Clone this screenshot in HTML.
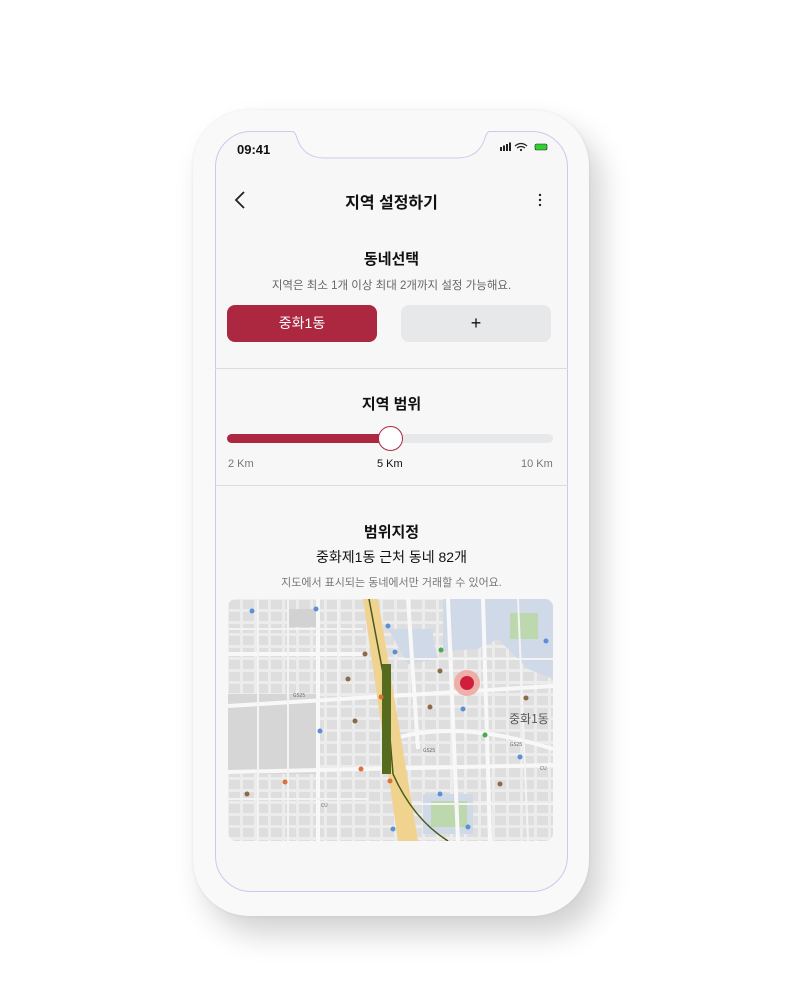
<!DOCTYPE html>
<html><head><meta charset="utf-8"><style>
*{margin:0;padding:0;box-sizing:border-box}
body{width:800px;height:1000px;background:#fff;position:relative;font-family:"Liberation Sans","Noto Sans CJK KR",sans-serif;overflow:hidden}
.phone{position:absolute;left:193px;top:110px;width:396px;height:806px;border-radius:56px;background:#f9f9f9;box-shadow:12px 18px 30px rgba(0,0,0,.18),0 0 3px rgba(0,0,0,.08)}
.screen{position:absolute;left:215px;top:131px;width:353px;height:761px;border:1px solid #cfc8ec;border-radius:36px;background:#f7f7f7;overflow:hidden}
.t{position:absolute;white-space:nowrap}
.c{left:215px;width:353px;text-align:center}
.hr{position:absolute;left:215px;width:353px;height:1px;background:#dcdcdc}
</style></head><body>
<div class="phone"></div>
<div class="screen"></div>
<svg style="position:absolute;left:285px;top:130px" width="212" height="32"><path d="M0 1 H6 Q10 1 12 8 Q18 28 40 28 H172 Q194 28 200 8 Q202 1 206 1 H212" fill="#f9f9f9" stroke="#cfc8ec" stroke-width="1"/><rect x="0" y="0" width="212" height="1" fill="#f9f9f9"/></svg>
<div class="t" style="left:237px;top:142px;font-size:13px;font-weight:bold;color:#111">09:41</div>
<svg style="position:absolute;left:500px;top:142px" width="50" height="10">
<rect x="0" y="5" width="2" height="4" fill="#222"/><rect x="3" y="3.5" width="2" height="5.5" fill="#222"/><rect x="6" y="2" width="2" height="7" fill="#222"/><rect x="9" y="0.5" width="2" height="8.5" fill="#222"/>
<path d="M15 4 Q21 -1 27 4 M17 6 Q21 3 25 6" stroke="#222" stroke-width="1.3" fill="none"/><circle cx="21" cy="8" r="1.1" fill="#222"/>
<rect x="35" y="2" width="12" height="6" rx="1.5" fill="#2ed12e" stroke="#222" stroke-width=".6"/></svg>
<svg style="position:absolute;left:233px;top:191px" width="14" height="18"><path d="M11 1 L3 9 L11 17" stroke="#222" stroke-width="1.8" fill="none"/></svg>
<div class="t c" style="top:189px;font-size:16px;font-weight:bold;color:#111">지역 설정하기</div>
<svg style="position:absolute;left:537px;top:192px" width="6" height="16"><circle cx="3" cy="3" r="1.2" fill="#222"/><circle cx="3" cy="8" r="1.2" fill="#222"/><circle cx="3" cy="13" r="1.2" fill="#222"/></svg>
<div class="t c" style="top:248px;font-size:15px;font-weight:bold;color:#111">동네선택</div>
<div class="t c" style="top:277px;font-size:11.5px;color:#666">지역은 최소 1개 이상 최대 2개까지 설정 가능해요.</div>
<div class="t" style="left:227px;top:305px;width:150px;height:37px;border-radius:8px;background:#ab2840;color:#fff;font-size:14px;text-align:center;line-height:37px">중화1동</div>
<div class="t" style="left:401px;top:305px;width:150px;height:37px;border-radius:8px;background:#e6e8e9;color:#111;font-size:18px;text-align:center;line-height:36px">+</div>
<div class="hr" style="top:368px"></div>
<div class="t c" style="top:393px;font-size:15px;font-weight:bold;color:#111">지역 범위</div>
<div class="t" style="left:227px;top:434px;width:326px;height:9px;border-radius:5px;background:#e6e8e9"></div>
<div class="t" style="left:227px;top:434px;width:165px;height:9px;border-radius:5px;background:#ab2840"></div>
<div class="t" style="left:378px;top:426px;width:25px;height:25px;border-radius:50%;background:#fff;border:1.5px solid #ab2840"></div>
<div class="t" style="left:228px;top:458px;font-size:11px;color:#777">2 Km</div>
<div class="t" style="left:377px;top:458px;font-size:11px;color:#111">5 Km</div>
<div class="t" style="left:521px;top:458px;font-size:11px;color:#777">10 Km</div>
<div class="hr" style="top:485px"></div>
<div class="t c" style="top:521px;font-size:15px;font-weight:bold;color:#111">범위지정</div>
<div class="t c" style="top:547px;font-size:14px;color:#111">중화제1동 근처 동네 82개</div>
<div class="t c" style="top:574px;font-size:11px;color:#777">지도에서 표시되는 동네에서만 거래할 수 있어요.</div>
<svg style="position:absolute;left:228px;top:599px;border-radius:8px" width="325" height="242">
<defs><pattern id="p" width="14" height="12" patternUnits="userSpaceOnUse"><rect width="14" height="12" fill="#ececec"/><rect x="1" y="1" width="11" height="9" fill="#dedede"/></pattern></defs>
<rect width="325" height="242" fill="url(#p)"/>
<rect x="0" y="95" width="88" height="80" fill="#d6d6d6"/>
<path d="M215 0 H325 V80 L300 70 L270 40 L250 50 L215 52 Z" fill="#cfd9e8"/>
<path d="M160 30 H205 V40 L210 60 L180 65 Z" fill="#cfd9e8"/>
<rect x="282" y="14" width="28" height="26" fill="#bcd8ac"/>
<rect x="60" y="10" width="30" height="18" fill="#d2d2d2"/>
<rect x="195" y="195" width="50" height="40" fill="#cfd9e8"/><rect x="203" y="202" width="36" height="26" fill="#bcd8ac"/>
<g stroke="#f8f8f8" stroke-width="4" fill="none">
<path d="M0 107 L325 87"/><path d="M0 173 L325 166"/><path d="M90 0 V242"/><path d="M255 0 L262 242"/><path d="M0 55 H135"/><path d="M165 140 Q230 120 325 150"/><path d="M180 0 L190 150"/><path d="M220 0 L230 242"/>
</g>
<g stroke="#f3f3f3" stroke-width="2" fill="none">
<path d="M30 0 V242"/><path d="M60 0 V242"/><path d="M110 0 V242"/><path d="M0 30 H135"/><path d="M0 200 H140"/><path d="M170 60 H325"/><path d="M170 205 H325"/><path d="M290 0 L300 242"/>
</g>
<path d="M135 0 H150 L190 242 H170 Z" fill="#efd38e"/>
<path d="M141 0 L158 90 L165 175 Q185 220 220 242" stroke="#4a5a1a" stroke-width="1.5" fill="none"/>
<rect x="154" y="65" width="9" height="110" fill="#556b1e"/>
<g fill="#5c8fd8"><circle cx="24" cy="12" r="2.5"/><circle cx="88" cy="10" r="2.5"/><circle cx="160" cy="27" r="2.5"/><circle cx="167" cy="53" r="2.5"/><circle cx="92" cy="132" r="2.5"/><circle cx="235" cy="110" r="2.5"/><circle cx="318" cy="42" r="2.5"/><circle cx="292" cy="158" r="2.5"/><circle cx="212" cy="195" r="2.5"/><circle cx="240" cy="228" r="2.5"/><circle cx="165" cy="230" r="2.5"/></g>
<g fill="#8b6a4a"><circle cx="137" cy="55" r="2.5"/><circle cx="120" cy="80" r="2.5"/><circle cx="127" cy="122" r="2.5"/><circle cx="212" cy="72" r="2.5"/><circle cx="202" cy="108" r="2.5"/><circle cx="298" cy="99" r="2.5"/><circle cx="272" cy="185" r="2.5"/><circle cx="19" cy="195" r="2.5"/></g>
<g fill="#e0703a"><circle cx="153" cy="98" r="2.5"/><circle cx="133" cy="170" r="2.5"/><circle cx="162" cy="182" r="2.5"/><circle cx="57" cy="183" r="2.5"/></g>
<g fill="#4caa4a"><circle cx="213" cy="51" r="2.5"/><circle cx="257" cy="136" r="2.5"/></g>
<g font-size="5" fill="#666" font-family="Noto Sans CJK KR,sans-serif"><text x="65" y="98">GS25</text><text x="195" y="153">GS25</text><text x="282" y="147">GS25</text><text x="312" y="171">CU</text><text x="93" y="208">CU</text></g>
<circle cx="239" cy="84" r="13" fill="#f0a8a2" opacity=".9"/><circle cx="239" cy="84" r="7" fill="#d01e3e"/>
<text x="281" y="124" font-size="12" fill="#555" font-family="Noto Sans CJK KR,sans-serif">중화1동</text>
</svg>
</body></html>
